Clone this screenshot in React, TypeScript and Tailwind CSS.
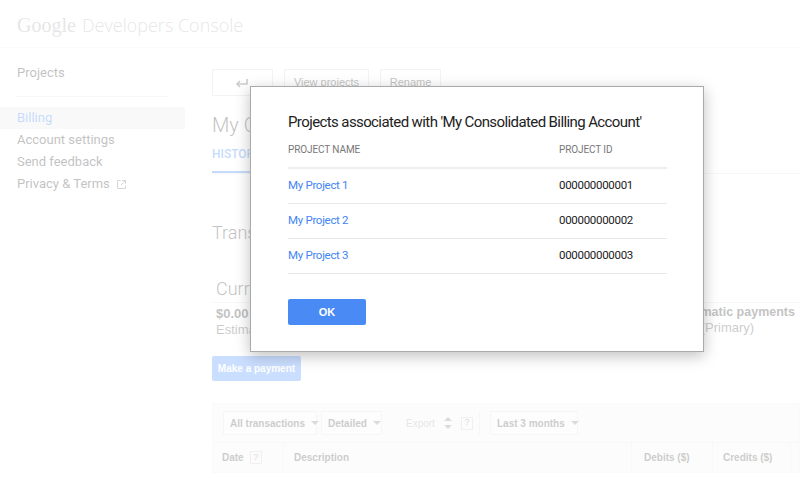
import React from "react";

const projects = [
  { name: "My Project 1", id: "000000000001" },
  { name: "My Project 2", id: "000000000002" },
  { name: "My Project 3", id: "000000000003" },
];

function Caret() {
  return <span className="ml-[6px] inline-block h-0 w-0 border-x-[4px] border-t-[4px] border-x-transparent border-t-[#888]" />;
}

function Help() {
  return (
    <span className="inline-flex h-[13px] w-[12px] items-center justify-center border border-[#ccc] text-[9px] font-normal text-[#888]">?</span>
  );
}

function Sidebar() {
  const items = ["Account settings", "Send feedback"];
  return (
    <aside className="w-[185px] shrink-0 pt-[16px] text-[13px] text-[#333]" style={{ fontFamily: "Roboto, sans-serif" }}>
      <div className="px-[17px] leading-[18px]">Projects</div>
      <div className="mx-[17px] mt-[14px] h-px w-[151px] bg-[#e4e4e4]" />
      <div className="mt-[10px] flex h-[22px] items-center bg-[#ececec] px-[17px] text-[#4285f4]">Billing</div>
      {items.map((t) => (
        <div key={t} className="flex h-[22px] items-center px-[17px]">{t}</div>
      ))}
      <div className="flex h-[22px] items-center gap-[6px] px-[17px]">
        Privacy &amp; Terms
        <svg width="11" height="11" viewBox="0 0 11 11" fill="none" stroke="#777" strokeWidth="1">
          <path d="M4.5 1.5H1.5V9.5H9.5V6.5" />
          <path d="M6 1.5H9.5V5M9.5 1.5L5 6" />
        </svg>
      </div>
    </aside>
  );
}

function Main() {
  return (
    <main className="min-w-0 flex-1 pl-[27px] pt-[21px] text-[#333]" style={{ fontFamily: "'Liberation Sans', Arial, sans-serif" }}>
      <div className="flex gap-[11px] text-[11px]">
        <button className="flex h-[27px] w-[61px] items-center justify-center border border-[#d8d8d8] bg-white">
          <svg width="16" height="12" viewBox="0 0 16 12" fill="none" stroke="#555" strokeWidth="1.6">
            <path d="M2 7H12V2" />
            <path d="M5 4L2 7L5 10" />
          </svg>
        </button>
        <button className="h-[27px] w-[85px] border border-[#d8d8d8] bg-white">View projects</button>
        <button className="h-[27px] w-[61px] border border-[#d8d8d8] bg-white">Rename</button>
      </div>
      <h1 className="mt-[17px] text-[20px] font-light leading-[24px]" style={{ fontFamily: "Roboto, sans-serif" }}>My Consolidated Billing Account</h1>
      <div className="mt-[8px] border-b border-[#e4e4e4]">
        <div className="w-[72px] border-b-2 border-[#4285f4] pb-[8px] text-[12px] font-medium text-[#4285f4]" style={{ fontFamily: "Roboto, sans-serif" }}>HISTORY</div>
      </div>
      <h2 className="mt-[48px] text-[18px] font-light leading-[22px]" style={{ fontFamily: "Roboto, sans-serif" }}>Transactions</h2>
      <div className="mt-[34px] border-b border-[#e4e4e4] pb-[2px] pl-[4px] text-[18px] font-light leading-[22px]" style={{ fontFamily: "Roboto, sans-serif" }}>Current balance</div>
      <div className="flex pl-[4px]">
        <div className="flex-1">
          <div className="mt-[3px] text-[13px] font-bold leading-[16px]">$0.00</div>
          <div className="text-[13px] leading-[15px] text-[#555]">Estimated</div>
        </div>
        <div className="w-[128px] shrink-0">
          <div className="mt-[1px] whitespace-nowrap text-[12.5px] font-bold leading-[16px]">Automatic payments</div>
          <div className="whitespace-nowrap text-[13px] leading-[15px] text-[#555]">Visa (Primary)</div>
        </div>
      </div>
      <button className="mt-[19px] h-[25px] w-[89px] rounded-[2px] bg-[#4d90fe] text-[10px] font-bold text-white">Make a payment</button>
      <div className="mt-[22px] whitespace-nowrap border border-[#eee] bg-[#f4f4f4] text-[10px] font-bold text-[#555]">
        <div className="flex items-center px-[10px] py-[7px]">
          <div className="flex h-[24px] w-[94px] items-center border border-[#e0e0e0] bg-[#f7f7f7] pl-[6px]">All transactions<Caret /></div>
          <div className="ml-[4px] flex h-[24px] w-[61px] items-center border border-[#e0e0e0] bg-[#f7f7f7] pl-[6px]">Detailed<Caret /></div>
          <div className="ml-[24px] flex h-[24px] w-[73px] items-center gap-[9px] font-normal text-[#aaa]">
            Export
            <svg width="8" height="12" viewBox="0 0 8 12" fill="#888"><path d="M4 0L8 4H0ZM4 12L0 8H8Z" /></svg>
            <Help />
          </div>
          <div className="h-[24px] w-px bg-[#e0e0e0]" />
          <div className="ml-[10px] flex h-[24px] w-[88px] items-center border border-[#e0e0e0] bg-[#f7f7f7] pl-[6px]">Last 3 months<Caret /></div>
        </div>
        <div className="flex h-[30px] items-center border-t border-[#e8e8e8]">
          <div className="flex h-full w-[71px] items-center gap-[6px] border-r border-[#e8e8e8] pl-[9px]">Date <Help /></div>
          <div className="flex h-full flex-1 items-center border-r border-[#e8e8e8] pl-[10px]">Description</div>
          <div className="flex h-full w-[81px] items-center border-r border-[#e8e8e8] pl-[12px]">Debits ($)</div>
          <div className="flex h-full w-[78px] items-center border-r border-[#e8e8e8] pl-[10px]">Credits ($)</div>
          <div className="w-[8px]" />
        </div>
      </div>
    </main>
  );
}

export default function App() {
  return (
    <div className="relative h-[479px] w-[800px] overflow-hidden bg-white">
      <header className="flex h-[48px] items-baseline border-b border-[#eee] pl-[17px] pt-[12px] text-[#aaa]">
        <span className="text-[20px] leading-[26px]" style={{ fontFamily: "'Liberation Serif', serif" }}>Google</span>
        <span className="ml-[6px] text-[18px] font-light leading-[26px]" style={{ fontFamily: "'Open Sans', sans-serif" }}>Developers Console</span>
      </header>
      <div className="flex">
        <Sidebar />
        <Main />
      </div>

      <div className="absolute inset-0 bg-white/70" />

      <div
        className="absolute left-[250px] top-[86px] w-[454px] border border-[#aaa] bg-white px-[37px] pb-[26px] pt-[25px] shadow-[0_4px_14px_rgba(0,0,0,0.25)]"
        style={{ fontFamily: "Roboto, sans-serif" }}
      >
        <h3 className="whitespace-nowrap text-[15px] leading-[20px] tracking-[-0.6px] text-[#222]">Projects associated with 'My Consolidated Billing Account'</h3>
        <div className="w-[379px]">
          <div className="flex h-[37px] items-center border-b-2 border-[#eee] text-[10px] tracking-[-0.1px] text-[#777]">
            <div className="w-[271px]">PROJECT NAME</div>
            <div>PROJECT ID</div>
          </div>
          {projects.map((p) => (
            <div key={p.id} className="flex h-[35px] items-center border-b border-[#e8e8e8] text-[11.5px] tracking-[-0.3px]">
              <div className="w-[271px] text-[#4285f4]">{p.name}</div>
              <div className="text-[#222]">{p.id}</div>
            </div>
          ))}
        </div>
        <button className="mt-[25px] h-[26px] w-[78px] rounded-[2px] bg-[#4a8af4] text-[11px] font-bold text-white" style={{ fontFamily: "'Liberation Sans', Arial, sans-serif" }}>
          OK
        </button>
      </div>
    </div>
  );
}
